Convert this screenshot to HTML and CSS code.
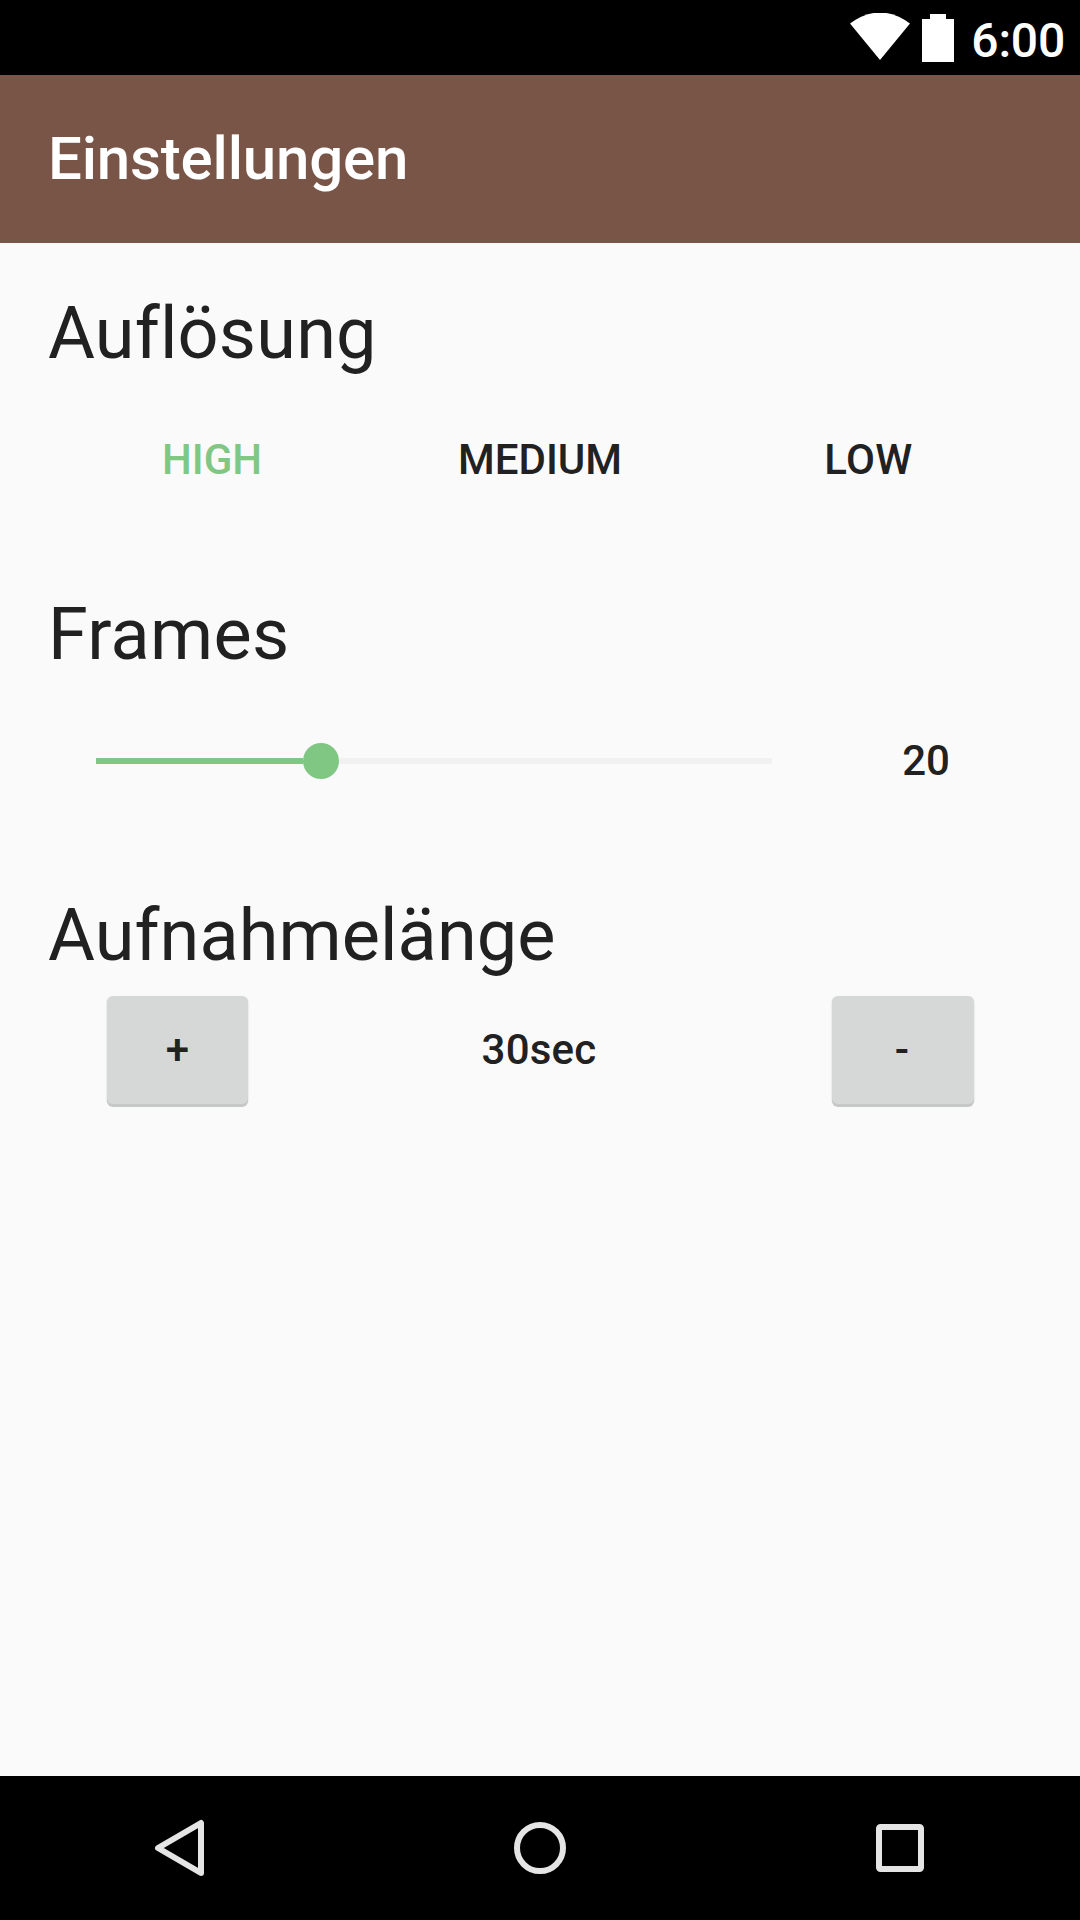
FILE: index.html
```html
<!DOCTYPE html>
<html lang="de">
<head>
<meta charset="utf-8">
<title>Einstellungen</title>
<link rel="stylesheet" href="styles.css">
</head>
<body>
<div class="screen">
  <header class="status">
    <svg class="wifi" width="60" height="48" viewBox="0 0 60 48"><path d="M0 10.500Q30-11.500 60 10.500L30 47Z"/></svg>
    <svg class="battery" width="32" height="48" viewBox="0 0 32 48"><path d="M8 0h16v5h8v43H0V5h8z"/></svg>
    <span class="clock">6:00</span>
  </header>
  <div class="appbar"><h1>Einstellungen</h1></div>
  <main>
    <section class="resolution">
      <h2>Auflösung</h2>
      <div class="tabs"><span class="tab active">HIGH</span><span class="tab">MEDIUM</span><span class="tab low">LOW</span></div>
    </section>
    <section class="frames">
      <h2>Frames</h2>
      <div class="slider-row">
        <div class="slider"><div class="fill"></div><div class="thumb"></div><div class="rest"></div></div>
        <span class="value">20</span>
      </div>
    </section>
    <section class="length">
      <h2>Aufnahmelänge</h2>
      <div class="stepper"><button>+</button><span class="duration">30sec</span><button class="minus">-</button></div>
    </section>
  </main>
  <nav>
    <svg width="360" height="144" viewBox="0 0 360 144"><path d="M201 47V97L158 72Z"/></svg>
    <svg width="360" height="144" viewBox="0 0 360 144"><circle cx="180" cy="72" r="23"/></svg>
    <svg width="360" height="144" viewBox="0 0 360 144"><rect x="159" y="51" width="42" height="42" rx="1.500"/></svg>
  </nav>
</div>
</body>
</html>
```
FILE: styles.css
```css
* { box-sizing: border-box; }
body { margin: 0; font-family: Roboto, sans-serif; color: #212121; background: #fafafa; }
.screen { width: 1080px; height: 1920px; display: flex; flex-direction: column; }
.status { height: 75px; background: #000; color: #fff; display: flex; justify-content: flex-end; padding: 14px 15px 0 0; }
.status svg { fill: #fff; }
.wifi { margin-top: -1px; }
.battery { margin-left: 12px; }
.clock { width: 111px; margin-top: -1px; text-align: right; font-size: 48px; font-weight: 500; line-height: 56px; letter-spacing: -0.2px; }
.appbar { height: 168px; background: #795548; color: #fff; display: flex; align-items: center; padding: 0 48px; }
h1 { margin: 0; font-size: 60px; font-weight: 500; line-height: 70px; letter-spacing: -0.17px; }
main { flex: 1; padding: 49px 48px 0; }
section { height: 301px; }
h2 { margin: 0; font-size: 72px; font-weight: 400; line-height: 84px; font-variant-ligatures: none; }
.resolution h2 { letter-spacing: 0.2px; }
.frames h2 { letter-spacing: 0.35px; }
.length h2 { letter-spacing: 0.1px; }
.tabs { display: grid; grid-template-columns: repeat(3, 1fr); height: 166px; align-items: center; text-align: center; font-size: 42px; font-weight: 500; }
.active { color: #81c784; }
.low { padding-left: 1px; letter-spacing: 0.4px; }
.slider-row { display: flex; align-items: center; height: 168px; }
.slider { display: flex; align-items: center; width: 676px; margin-left: 48px; }
.fill { width: 207px; height: 6px; background: #81c784; }
.thumb { width: 36px; height: 36px; border-radius: 50%; background: #81c784; }
.rest { flex: 1; height: 6px; background: #f1f1f1; }
.value { flex: 1; padding: 0 0 2px 48px; text-align: center; font-size: 42px; font-weight: 500; }
.stepper { display: flex; align-items: center; justify-content: space-between; padding: 18px 58px 0 59px; font-size: 42px; font-weight: 500; }
.duration { padding: 0 2px 2px 0; letter-spacing: 0.2px; }
button { width: 141px; height: 108px; border: 0; border-radius: 6px; padding: 0 0 2px; background: #d6d7d7; box-shadow: 0 3px 0 #c6c7c7, 0 1px 2px #0003; font: inherit; color: inherit; }
.minus { width: 142px; padding-right: 2px; }
nav { height: 144px; background: #000; display: flex; }
nav svg { fill: none; stroke: #e5e5e5; stroke-width: 6; stroke-linejoin: round; }
```
